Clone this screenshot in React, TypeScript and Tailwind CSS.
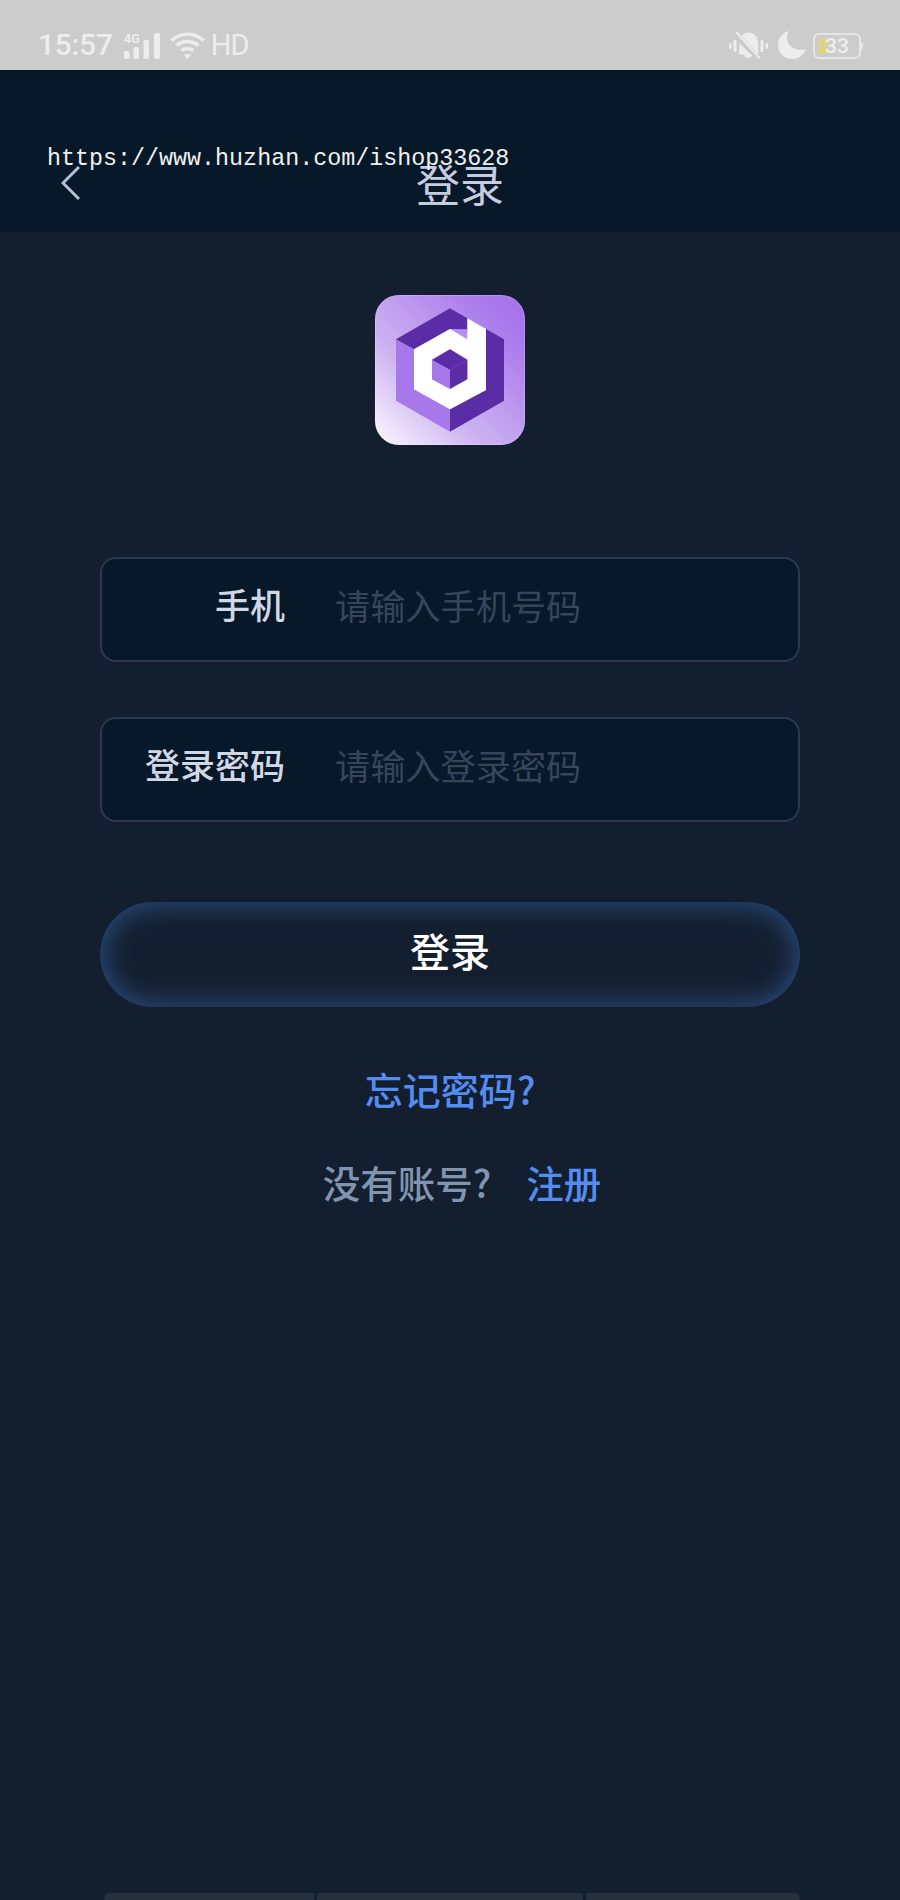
import React from "react";

const cjk = "font-['Noto_Sans_CJK_SC','Noto_Sans',sans-serif]";

function Signal() {
  return (
    <svg width="36" height="26" viewBox="0 0 36 26" fill="#ededed" className="overflow-visible">
      <text x="0" y="10" fontSize="12.5" fontWeight="700" fontFamily="Roboto, sans-serif">4G</text>
      <rect x="0" y="18" width="5.5" height="8" rx="1.5" />
      <rect x="9.5" y="14" width="5.5" height="12" rx="1.5" />
      <rect x="19.5" y="7" width="5.5" height="19" rx="1.5" />
      <rect x="30" y="0" width="6" height="26" rx="1.5" />
    </svg>
  );
}

function Wifi() {
  return (
    <svg width="35" height="27" viewBox="0 0 35 27" fill="none" stroke="#ededed" strokeWidth="3.5">
      <path d="M1.5 8.5C10.5 0 24.5 0 33.5 8.5" />
      <path d="M6.5 13.5C12.5 8 22.5 8 28.5 13.5" />
      <path d="M11.5 18.5C14.5 16 20.5 16 23.5 18.5" />
      <path d="M14 23L17.5 27L21 23C19 21.6 16 21.6 14 23Z" fill="#ededed" stroke="none" />
    </svg>
  );
}

function MutedBell() {
  return (
    <svg width="39" height="27" viewBox="0 0 39 27" fill="#ededed">
      <rect x="0" y="11" width="2.5" height="6" rx="1" />
      <rect x="4.5" y="8" width="3" height="12" rx="1" />
      <rect x="31.5" y="8" width="3" height="12" rx="1" />
      <rect x="36.5" y="11" width="2.5" height="6" rx="1" />
      <path d="M12 5L28 21.5C29.5 22 30 21 29.5 20.5L29 12C29 4 25 0.5 19.5 0.5C16 0.5 13.5 2 12 5Z" />
      <path d="M10.5 11.5L10 20C9.5 21 10 22.5 12 22.5H15C15.5 26.5 22 27 23 23.5L10.5 11.5Z" />
      <path d="M8 1.5L29 25" stroke="#cccccc" strokeWidth="3.5" fill="none" />
      <path d="M8 1L30 25.5" stroke="#ededed" strokeWidth="2" fill="none" strokeLinecap="round" />
    </svg>
  );
}

function Moon() {
  return (
    <svg width="28" height="28" viewBox="0 0 28 28" fill="#ededed">
      <path d="M11 0C6 7 9.5 21 28 18.5C25 25 19.5 28 14 28C6 28 0 21.5 0 14C0 7 4.5 1.5 11 0Z" />
    </svg>
  );
}

function Battery() {
  return (
    <div className="flex items-center">
      <div className="relative flex h-[26px] w-[48px] items-center rounded-[6px] border-2 border-[#e6e6e6] pl-[10px]">
        <div className="absolute left-[3px] top-[3px] h-[16px] w-[10px] rounded-[1px] bg-[#dcd48e]" />
        <span className="relative font-['Roboto',sans-serif] text-[21px] font-medium leading-none text-[#ededed]">33</span>
      </div>
      <div className="h-[8px] w-[2px] rounded-r-[2px] bg-[#e6e6e6]" />
    </div>
  );
}

function Logo() {
  return (
    <div className="h-[150px] w-[150px] overflow-hidden rounded-[24px] bg-[linear-gradient(45deg,#fdfaff_0%,#cdb4f1_35%,#a878ec_85%,#a472ea_100%)] shadow-[inset_0_0_0_1px_#ffffff33]">
      <svg className="h-full w-full" viewBox="45 45 450 450">
        <polygon points="108,178 162,208 162,328 270,388 270,455 108,362" fill="#a678ea" />
        <polygon points="108,178 270,85 322,115 322,148 270,147 162,208" fill="#5a2ca6" />
        <polygon points="378,147 432,178 432,362 270,455 270,388 378,330" fill="#5a2ca6" />
        <path
          d="M162 208L270 147L322 178V115L378 147V330L270 388L162 328ZM216 238V298L270 328L322 298V238L270 208Z"
          fill="#ffffff"
          fillRule="evenodd"
        />
        <polygon points="216,240 270,208 322,240 270,270" fill="#5a2ca6" />
        <polygon points="216,240 270,270 270,326 216,298" fill="#a678ea" />
        <polygon points="270,270 322,240 322,298 270,326" fill="#5a2ca6" />
      </svg>
    </div>
  );
}

function Field({ label, placeholder }: { label: string; placeholder: string }) {
  return (
    <div className="flex h-[105px] items-center rounded-[16px] border-2 border-[#2c394d] bg-[#071828]">
      <span className="mb-[12px] w-[183px] text-right text-[35px] font-medium leading-[48px] text-[#d2d7e6]">{label}</span>
      <span className="mb-[9px] ml-[50px] text-[35.2px] leading-[48px] text-[#36445c]">{placeholder}</span>
    </div>
  );
}

export default function App() {
  return (
    <div className={`relative flex h-[1900px] w-[900px] flex-col overflow-hidden bg-[#131f2e] ${cjk}`}>
      <div className="flex h-[70px] shrink-0 items-end justify-between bg-[#cccccc] pb-[11px] pl-[38px] pr-[37px]">
        <div className="flex items-end">
          <span className="font-['Roboto',sans-serif] text-[29.5px] font-medium leading-[28px] text-[#ededed]">15:57</span>
          <div className="ml-[11px]"><Signal /></div>
          <div className="ml-[10px]"><Wifi /></div>
          <span className="ml-[6px] font-['Roboto',sans-serif] text-[29px] font-normal leading-[28px] tracking-[-1px] text-[#ededed]">HD</span>
        </div>
        <div className="flex items-end">
          <MutedBell />
          <div className="ml-[10px]"><Moon /></div>
          <div className="ml-[7px]"><Battery /></div>
        </div>
      </div>

      <div className="relative flex h-[162px] shrink-0 items-center bg-[#071828] pl-[61px] pt-[63px]">
        <svg width="19" height="34" viewBox="0 0 19 34" fill="none" stroke="#b6c0d8" strokeWidth="3" className="shrink-0">
          <path d="M18 1L2 17L18 33" />
        </svg>
        <span className="ml-[336px] text-[44px] font-normal leading-[56px] text-[#c6cde0]">登录</span>
        <span className="absolute left-[47px] top-[75px] font-['Liberation_Mono',monospace] text-[23.35px] leading-[28px] text-[#f0f0f0]">
          https://www.huzhan.com/ishop33628
        </span>
      </div>

      <div className="flex flex-1 flex-col px-[100px]">
        <div className="mt-[63px] flex justify-center">
          <Logo />
        </div>
        <div className="mt-[112px] flex flex-col gap-[55px]">
          <Field label="手机" placeholder="请输入手机号码" />
          <Field label="登录密码" placeholder="请输入登录密码" />
        </div>
        <div className="mt-[80px] flex h-[105px] items-center justify-center rounded-full bg-[#131f2e] shadow-[inset_0_0_30px_#30558f]">
          <span className="mb-[9px] text-[40px] font-medium leading-[48px] text-white">登录</span>
        </div>
        <div className="mt-[58px] text-center text-[38px] font-medium leading-[48px] text-[#558cf2]">忘记密码?</div>
        <div className="mt-[45px] flex justify-center pl-[24px] text-[37.5px] font-medium leading-[48px]">
          <span className="text-[#8295b0]">没有账号?</span>
          <span className="ml-[35px] text-[#558cf2]">注册</span>
        </div>
      </div>

      <div className="flex h-[7px] shrink-0 gap-[3px] pl-[104px] pr-[100px]">
        <div className="w-[210px] rounded-tl-[6px] bg-[#262f3d]" />
        <div className="w-[266px] bg-[#262f3d]" />
        <div className="flex-1 rounded-tr-[6px] bg-[#262f3d]" />
      </div>
    </div>
  );
}
